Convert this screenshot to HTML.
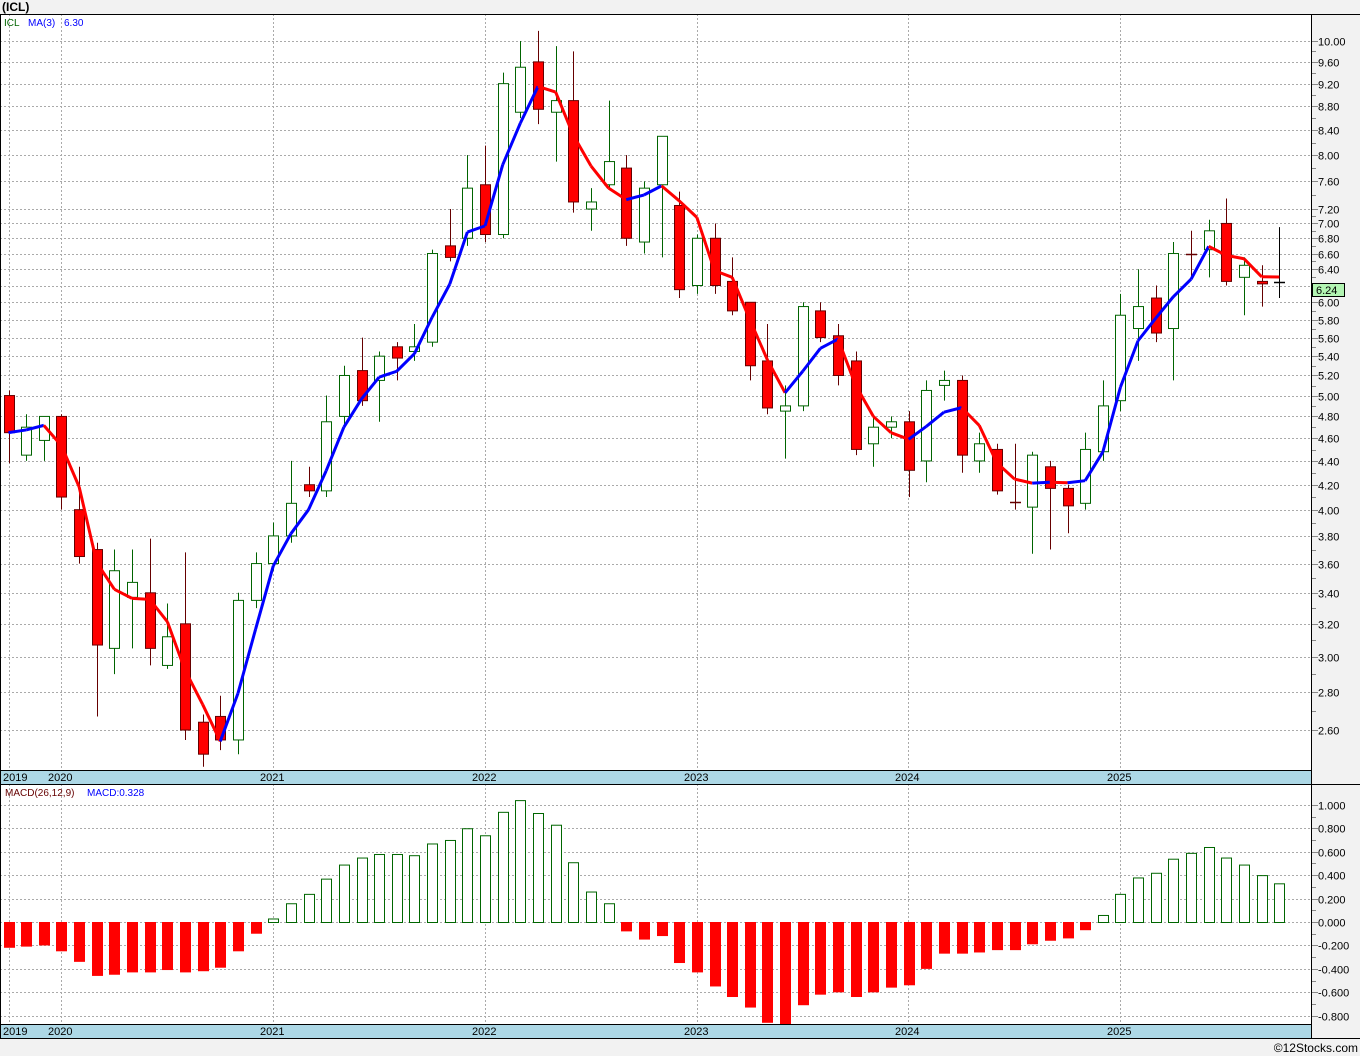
<!DOCTYPE html>
<html><head><meta charset="utf-8"><style>
html,body{margin:0;padding:0;background:#f2f2f2;width:1360px;height:1056px;overflow:hidden}
svg{display:block}
text{font-family:"Liberation Sans","DejaVu Sans",sans-serif}
</style></head><body>
<svg id="s" width="1360" height="1056" xmlns="http://www.w3.org/2000/svg"></svg>
<script>
const D=[[5.00,5.05,4.38,4.65],[4.45,4.82,4.40,4.70],[4.58,4.80,4.40,4.80],[4.80,4.82,4.00,4.10],[4.00,4.35,3.60,3.65],[3.70,3.75,2.67,3.07],[3.05,3.70,2.90,3.55],[3.37,3.70,3.05,3.47],[3.40,3.78,2.95,3.05],[2.95,3.33,2.93,3.12],[3.20,3.68,2.55,2.60],[2.64,2.68,2.42,2.48],[2.67,2.78,2.50,2.55],[2.55,3.40,2.48,3.35],[3.35,3.68,3.30,3.60],[3.60,3.90,3.55,3.80],[3.80,4.40,3.75,4.05],[4.20,4.35,4.10,4.15],[4.15,5.00,4.10,4.75],[4.80,5.30,4.70,5.20],[5.25,5.60,4.90,4.95],[5.15,5.45,4.75,5.40],[5.50,5.55,5.15,5.38],[5.45,5.75,5.35,5.50],[5.55,6.65,5.50,6.60],[6.70,7.20,6.50,6.55],[6.80,8.00,6.70,7.50],[7.55,8.15,6.75,6.85],[6.85,9.40,6.80,9.20],[8.70,10.00,8.60,9.50],[9.60,10.20,8.50,8.75],[8.70,9.90,7.90,8.90],[8.90,9.80,7.15,7.30],[7.20,7.50,6.90,7.30],[7.55,8.90,7.50,7.90],[7.80,8.00,6.70,6.80],[6.75,7.60,6.60,7.50],[7.55,8.30,6.55,8.30],[7.25,7.45,6.05,6.15],[6.20,6.85,6.10,6.80],[6.80,7.00,6.10,6.20],[6.25,6.55,5.85,5.90],[6.00,6.00,5.15,5.30],[5.35,5.75,4.82,4.88],[4.85,5.10,4.42,4.90],[4.90,6.00,4.85,5.95],[5.90,6.00,5.55,5.60],[5.62,5.75,5.10,5.20],[5.35,5.45,4.45,4.50],[4.55,4.80,4.35,4.70],[4.70,4.80,4.60,4.75],[4.75,4.85,4.10,4.32],[4.40,5.15,4.22,5.05],[5.10,5.25,4.95,5.15],[5.15,5.20,4.30,4.45],[4.40,4.65,4.30,4.55],[4.50,4.55,4.12,4.15],[4.06,4.55,4.00,4.04],[4.02,4.48,3.67,4.45],[4.35,4.40,3.70,4.17],[4.17,4.20,3.82,4.03],[4.05,4.65,4.00,4.50],[4.48,5.15,4.40,4.90],[4.95,6.10,4.85,5.85],[5.70,6.40,5.35,5.95],[6.05,6.20,5.55,5.65],[5.70,6.75,5.15,6.60],[6.60,6.90,6.30,6.58],[6.65,7.05,6.30,6.90],[7.00,7.35,6.20,6.25],[6.30,6.55,5.85,6.45],[6.25,6.45,5.95,6.22],[6.24,6.95,6.05,6.24]];
const M=[-0.22,-0.21,-0.20,-0.25,-0.34,-0.46,-0.45,-0.43,-0.43,-0.41,-0.43,-0.42,-0.39,-0.25,-0.10,0.03,0.16,0.24,0.37,0.49,0.55,0.58,0.58,0.57,0.67,0.70,0.80,0.74,0.94,1.04,0.93,0.83,0.51,0.26,0.16,-0.08,-0.15,-0.12,-0.35,-0.43,-0.55,-0.64,-0.73,-0.86,-0.88,-0.71,-0.62,-0.60,-0.64,-0.60,-0.56,-0.54,-0.40,-0.27,-0.27,-0.26,-0.24,-0.24,-0.19,-0.16,-0.14,-0.07,0.06,0.24,0.38,0.42,0.54,0.59,0.64,0.55,0.49,0.40,0.33];
const X=i=>8.5+17.65*i, Y=p=>41+511.5*(Math.log(10)-Math.log(p)), MY=v=>922-117.2*v;
let o='';
const R=(x,y,w,h,f,s,sw)=>o+=`<rect x="${x}" y="${y}" width="${w}" height="${h}" fill="${f}" ${s?`stroke="${s}" stroke-width="${sw||1}"`:''}/>`;
const L=(x1,y1,x2,y2,s,w,d)=>o+=`<line x1="${x1}" y1="${y1}" x2="${x2}" y2="${y2}" stroke="${s}" stroke-width="${w||1}" ${d?'stroke-dasharray="'+d+'"':''}/>`;
const T=(x,y,t,f,sz,a)=>o+=`<text x="${x}" y="${y}" fill="${f}" font-size="${sz||11}" ${a?'text-anchor="'+a+'"':''}>${t}</text>`;
R(0,14,1311,756,'#fff');R(0,784,1311,240,'#fff');
o+='<text x="2" y="11" fill="#000" font-size="12" font-weight="bold">(ICL)</text>';
const years=[[9,'2019'],[61,'2020'],[273,'2021'],[485,'2022'],[697,'2023'],[908,'2024'],[1120,'2025']];
years.forEach(([x])=>{L(x+0.5,14,x+0.5,770,'#aaa',1,'2,2');L(x+0.5,784,x+0.5,1024,'#aaa',1,'2,2');});
let labs=[];for(let p=2.6;p<=7.21;p+=0.2)labs.push(p);labs.push(7.6,8.0,8.4,8.8,9.2,9.6,10.0);
labs.forEach(p=>{const y=Math.round(Y(p))+0.5;L(0,y,1311,y,'#aaa',1,'2,2');L(1311,y,1318,y,'#888');T(1318,y+4,p.toFixed(2),'#000',11);});
for(let k=0;k<labs.length-1;k++){const y=Math.round((Y(labs[k])+Y(labs[k+1]))/2)+0.5;L(1311,y,1316,y,'#888');}
for(let v=-0.8;v<=1.001;v+=0.2){const y=Math.round(MY(v))+0.5;L(0,y,1311,y,'#aaa',1,'2,2');L(1311,y,1318,y,'#888');T(1318,y+4,(Math.abs(v)<1e-9?0:v).toFixed(3),'#000',11);const y2=Math.round(MY(v+0.1))+0.5;if(v<0.95)L(1311,y2,1316,y2,'#888');}
D.forEach((d,i)=>{const[op,h,l,c]=d,x=X(i),up=c>op,doji=Math.abs(c-op)<0.03;
const wc=i==72?'#000':(up?'#006400':'#600');
L(Math.round(x)+0.5,Y(h),Math.round(x)+0.5,Y(l),wc,1);
const t=Y(Math.max(op,c)),b=Y(Math.min(op,c));
if(doji){L(Math.round(x)-5,Math.round(t)+0.5,Math.round(x)+6,Math.round(t)+0.5,wc,1.5);}
else if(up)R(Math.round(x)-4.5,t,10,Math.max(b-t,1),'#fff','#006400');
else R(Math.round(x)-4.5,t,10,Math.max(b-t,1),'#f00','#600');});
for(let i=1;i<D.length;i++){const ma=j=>{const a=D.slice(Math.max(0,j-2),j+1);return a.reduce((s,e)=>s+e[3],0)/a.length;};
const m0=ma(i-1),m1=ma(i);L(X(i-1),Y(m0),X(i),Y(m1),m1>=m0?'#00f':'#f00',3);}
M.forEach((v,i)=>{const x=Math.round(X(i))-5,y0=MY(0);
if(v>=0)R(x+0.5,MY(v)+0.5,10,y0-MY(v),'#fff','#060');else R(x,y0,11,MY(v)-y0,'#f00');});
R(0,770,1311,14,'#add8e6');R(0,1024,1311,14,'#add8e6');
L(0,770.5,1311,770.5,'#000');L(0,784.5,1360,784.5,'#000');L(0,1024.5,1311,1024.5,'#000');L(0,1038.5,1360,1038.5,'#000');
L(0,14.5,1360,14.5,'#000');L(0.5,14,0.5,1038,'#000');L(1311.5,14,1311.5,1038,'#000');
years.forEach(([x,t],k)=>{const tx=k==0?3:x-13;T(tx,781,t,'#000',11);T(tx,1035,t,'#000',11);});
T(4,26,'ICL','#006400',10);T(28,26,'MA(3)','#00f',10);T(64,26,'6.30','#00f',10);
T(5,796,'MACD(26,12,9)','#600',10);T(87,796,'MACD:0.328','#00f',10);
R(1312.5,283.5,32,13,'#b3f5b3','#000');T(1316,294,'6.24','#000',11);
T(1358,1052,'©12Stocks.com','#000',12,'end');
document.getElementById('s').innerHTML=o;
</script>
</body></html>
